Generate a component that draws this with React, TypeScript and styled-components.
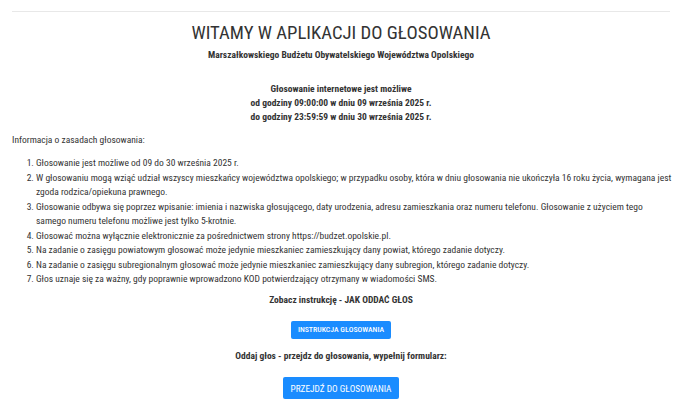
import React from "react";
import styled, { createGlobalStyle } from "styled-components";

const GlobalStyle = createGlobalStyle`
  html, body { margin: 0; padding: 0; background: #fff; }
  body { font-family: "Roboto Condensed", "Roboto", sans-serif; color: #333; }
`;

const Page = styled.div`
  padding: 0 30px 12px 12px;
  font-size: 9.5px;
  line-height: 14.5px;
`;

const Header = styled.div`
  height: 11px;
  border-bottom: 1px solid #e8e8e8;
`;

const Center = styled.div`
  text-align: center;
`;

const Title = styled.h1`
  margin: 10px 0 0;
  font-size: 18.7px;
  font-weight: 400;
  line-height: 22px;
  color: #333;
`;

const Subtitle = styled.h2`
  margin: 4px 0 0;
  font-size: 9.5px;
  font-weight: 700;
  line-height: 14px;
`;

const Dates = styled.p`
  margin: 20px 0 0;
  font-size: 9.5px;
  font-weight: 700;
  line-height: 14px;
`;

const Info = styled.p`
  margin: 9px 0 0;
`;

const Rules = styled.ol`
  margin: 8.5px -3px 0 0;
  padding-left: 24px;
`;

const Strong = styled.p<{ $top: number }>`
  margin: ${(p) => p.$top}px 0 0;
  font-weight: 700;
  text-align: center;
`;

const Button = styled.button<{ $big?: boolean }>`
  margin-top: 13.75px;
  border: none;
  border-radius: 2px;
  background: #1a8cff;
  color: #fff;
  font-family: "Roboto Condensed", "Roboto", sans-serif;
  font-size: ${(p) => (p.$big ? 9.3 : 7.8)}px;
  font-weight: ${(p) => (p.$big ? 400 : 500)};
  height: ${(p) => (p.$big ? 22 : 18)}px;
  padding: ${(p) => (p.$big ? "0 8px" : "0 7px")};
  line-height: 1;
  vertical-align: top;
  cursor: pointer;
`;

const rules = [
  "Głosowanie jest możliwe od 09 do 30 września 2025 r.",
  "W głosowaniu mogą wziąć udział wszyscy mieszkańcy województwa opolskiego; w przypadku osoby, która w dniu głosowania nie ukończyła 16 roku życia, wymagana jest zgoda rodzica/opiekuna prawnego.",
  "Głosowanie odbywa się poprzez wpisanie: imienia i nazwiska głosującego, daty urodzenia, adresu zamieszkania oraz numeru telefonu. Głosowanie z użyciem tego samego numeru telefonu możliwe jest tylko 5-krotnie.",
  "Głosować można wyłącznie elektronicznie za pośrednictwem strony https://budzet.opolskie.pl.",
  "Na zadanie o zasięgu powiatowym głosować może jedynie mieszkaniec zamieszkujący dany powiat, którego zadanie dotyczy.",
  "Na zadanie o zasięgu subregionalnym głosować może jedynie mieszkaniec zamieszkujący dany subregion, którego zadanie dotyczy.",
  "Głos uznaje się za ważny, gdy poprawnie wprowadzono KOD potwierdzający otrzymany w wiadomości SMS.",
];

export default function App() {
  return (
    <>
      <GlobalStyle />
      <Page>
        <Header />
        <Center>
          <Title>WITAMY W APLIKACJI DO GŁOSOWANIA</Title>
          <Subtitle>Marszałkowskiego Budżetu Obywatelskiego Województwa Opolskiego</Subtitle>
          <Dates>
            Głosowanie internetowe jest możliwe
            <br />
            od godziny 09:00:00 w dniu 09 września 2025 r.
            <br />
            do godziny 23:59:59 w dniu 30 września 2025 r.
          </Dates>
        </Center>
        <Info>Informacja o zasadach głosowania:</Info>
        <Rules>
          {rules.map((r) => (
            <li key={r}>{r}</li>
          ))}
        </Rules>
        <Strong $top={6.5}>Zobacz instrukcję - JAK ODDAĆ GŁOS</Strong>
        <Center>
          <Button>INSTRUKCJA GŁOSOWANIA</Button>
        </Center>
        <Strong $top={9.75}>Oddaj głos - przejdz do głosowania, wypełnij formularz:</Strong>
        <Center>
          <Button $big>PRZEJDŹ DO GŁOSOWANIA</Button>
        </Center>
      </Page>
    </>
  );
}
